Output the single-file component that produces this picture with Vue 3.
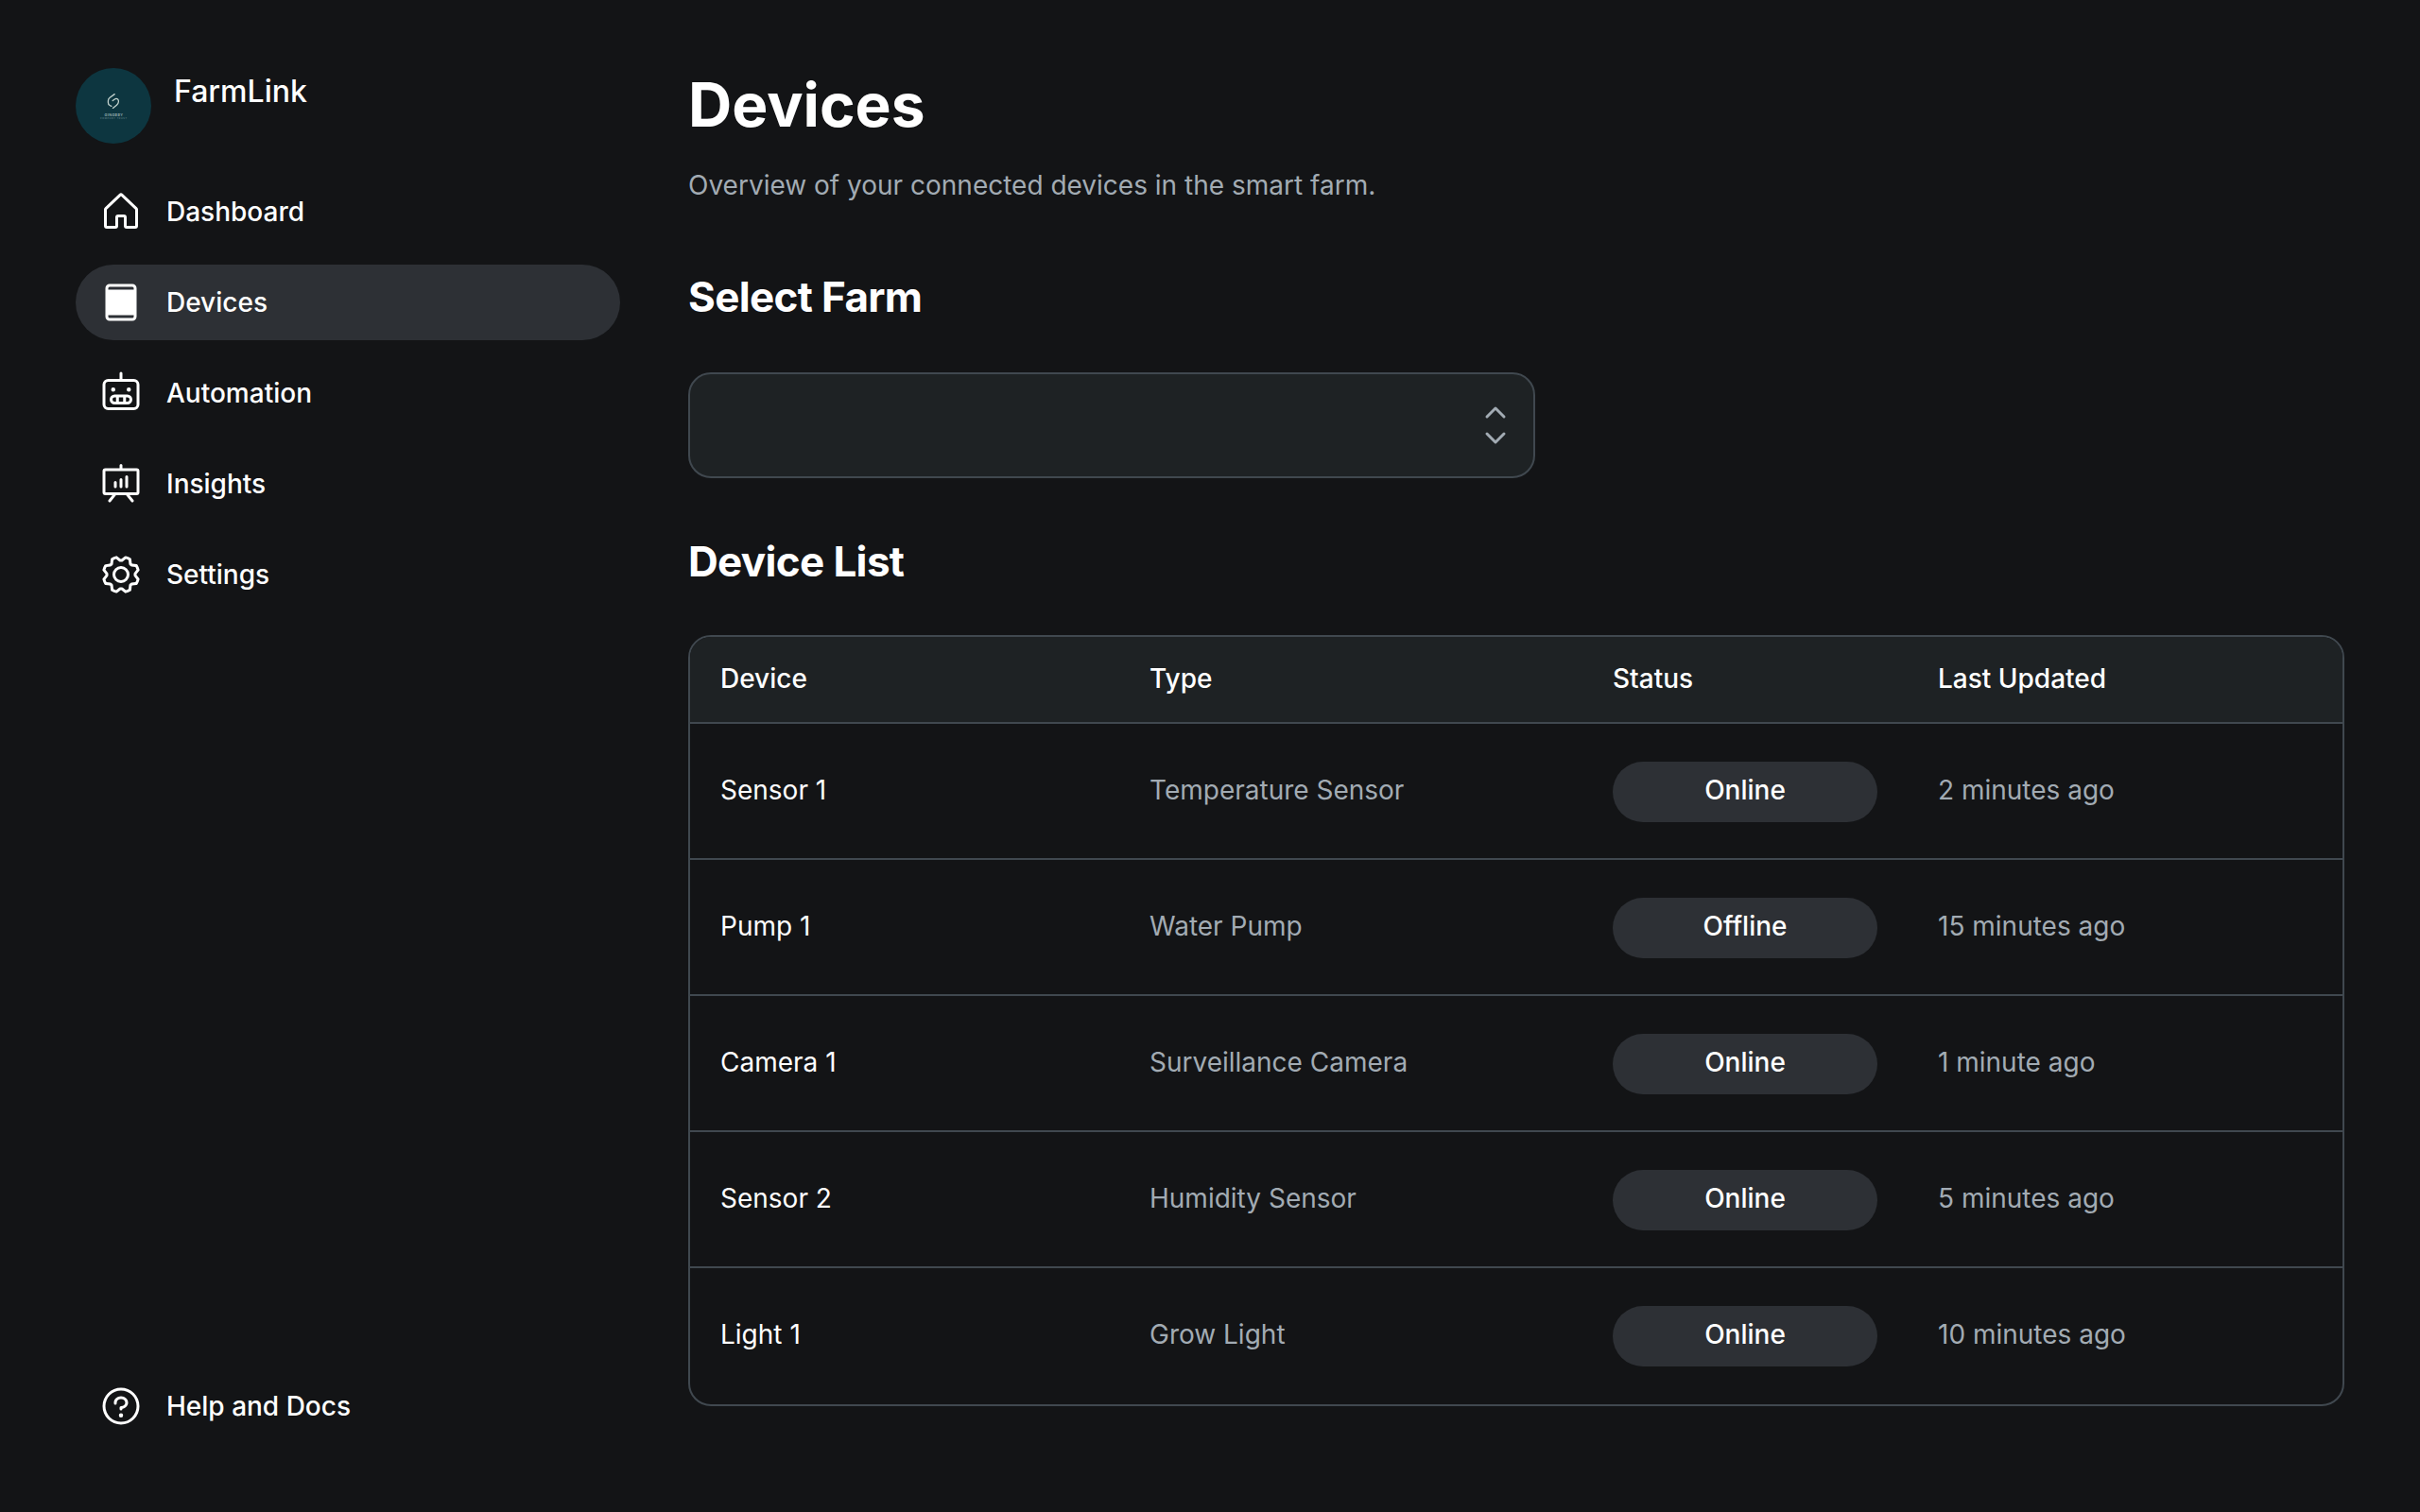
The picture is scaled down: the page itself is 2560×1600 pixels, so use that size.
<script setup>
const icons = {
  house: 'M218.83,103.77l-80-75.48a1.14,1.14,0,0,1-.11-.11,16,16,0,0,0-21.53,0l-.11.11L37.17,103.77A16,16,0,0,0,32,115.55V208a16,16,0,0,0,16,16H96a16,16,0,0,0,16-16V160h32v48a16,16,0,0,0,16,16h48a16,16,0,0,0,16-16V115.55A16,16,0,0,0,218.83,103.77ZM208,208H160V160a16,16,0,0,0-16-16H112a16,16,0,0,0-16,16v48H48V115.55l.11-.1L128,40l79.9,75.43.11.1Z',
  tablet: 'M192,24H64A24,24,0,0,0,40,48V208a24,24,0,0,0,24,24H192a24,24,0,0,0,24-24V48A24,24,0,0,0,192,24ZM64,40H192a8,8,0,0,1,8,8v8H56V48A8,8,0,0,1,64,40ZM192,216H64a8,8,0,0,1-8-8v-8H200v8A8,8,0,0,1,192,216Z',
  robot: 'M200,48H136V16a8,8,0,0,0-16,0V48H56A32,32,0,0,0,24,80V192a32,32,0,0,0,32,32H200a32,32,0,0,0,32-32V80A32,32,0,0,0,200,48Zm16,144a16,16,0,0,1-16,16H56a16,16,0,0,1-16-16V80A16,16,0,0,1,56,64H200a16,16,0,0,1,16,16Zm-52-56H92a28,28,0,0,0,0,56h72a28,28,0,0,0,0-56Zm-24,16v24H116V152ZM80,164a12,12,0,0,1,12-12h8v24H92A12,12,0,0,1,80,164Zm84,12h-8V152h8a12,12,0,0,1,0,24ZM72,108a12,12,0,1,1,12,12A12,12,0,0,1,72,108Zm88,0a12,12,0,1,1,12,12A12,12,0,0,1,160,108Z',
  chart: 'M216,40H136V24a8,8,0,0,0-16,0V40H40A16,16,0,0,0,24,56V176a16,16,0,0,0,16,16H79.36L57.75,219a8,8,0,0,0,12.5,10l29.59-37h56.32l29.59,37a8,8,0,1,0,12.5-10l-21.61-27H216a16,16,0,0,0,16-16V56A16,16,0,0,0,216,40Zm0,136H40V56H216V176ZM104,120v24a8,8,0,0,1-16,0V120a8,8,0,0,1,16,0Zm32-16v40a8,8,0,0,1-16,0V104a8,8,0,0,1,16,0Zm32-16v56a8,8,0,0,1-16,0V88a8,8,0,0,1,16,0Z',
  gear: 'M128,80a48,48,0,1,0,48,48A48.05,48.05,0,0,0,128,80Zm0,80a32,32,0,1,1,32-32A32,32,0,0,1,128,160Zm88-29.84q.06-2.16,0-4.32l14.92-18.64a8,8,0,0,0,1.48-7.06,107.21,107.21,0,0,0-10.88-26.25,8,8,0,0,0-6-3.93l-23.72-2.64q-1.48-1.56-3-3L186,40.54a8,8,0,0,0-3.94-6,107.71,107.71,0,0,0-26.25-10.87,8,8,0,0,0-7.06,1.49L130.16,40Q128,40,125.84,40L107.2,25.11a8,8,0,0,0-7.06-1.48A107.6,107.6,0,0,0,73.89,34.51a8,8,0,0,0-3.93,6L67.32,64.27q-1.56,1.49-3,3L40.54,70a8,8,0,0,0-6,3.94,107.71,107.71,0,0,0-10.87,26.25,8,8,0,0,0,1.49,7.06L40,125.84Q40,128,40,130.16L25.11,148.8a8,8,0,0,0-1.48,7.06,107.21,107.21,0,0,0,10.88,26.25,8,8,0,0,0,6,3.93l23.72,2.64q1.49,1.56,3,3L70,215.46a8,8,0,0,0,3.94,6,107.71,107.71,0,0,0,26.25,10.87,8,8,0,0,0,7.06-1.49L125.84,216q2.16.06,4.32,0l18.64,14.92a8,8,0,0,0,7.06,1.48,107.21,107.21,0,0,0,26.25-10.88,8,8,0,0,0,3.93-6l2.64-23.72q1.56-1.48,3-3L215.46,186a8,8,0,0,0,6-3.94,107.71,107.71,0,0,0,10.87-26.25,8,8,0,0,0-1.49-7.06Zm-16.1-6.5a73.93,73.93,0,0,1,0,8.68,8,8,0,0,0,1.74,5.48l14.19,17.73a91.57,91.57,0,0,1-6.23,15L187,173.11a8,8,0,0,0-5.1,2.64,74.11,74.11,0,0,1-6.14,6.14,8,8,0,0,0-2.64,5.1l-2.51,22.58a91.32,91.32,0,0,1-15,6.23l-17.74-14.19a8,8,0,0,0-5-1.75h-.48a73.93,73.93,0,0,1-8.68,0,8,8,0,0,0-5.48,1.74L100.45,215.8a91.57,91.57,0,0,1-15-6.23L82.89,187a8,8,0,0,0-2.64-5.1,74.11,74.11,0,0,1-6.14-6.14,8,8,0,0,0-5.1-2.64L46.43,170.6a91.32,91.32,0,0,1-6.23-15l14.19-17.74a8,8,0,0,0,1.74-5.48,73.93,73.93,0,0,1,0-8.68,8,8,0,0,0-1.74-5.48L40.2,100.45a91.57,91.57,0,0,1,6.23-15L69,82.89a8,8,0,0,0,5.1-2.64,74.11,74.11,0,0,1,6.14-6.14A8,8,0,0,0,82.89,69L85.4,46.43a91.32,91.32,0,0,1,15-6.23l17.74,14.19a8,8,0,0,0,5.48,1.74,73.93,73.93,0,0,1,8.68,0,8,8,0,0,0,5.48-1.74L155.55,40.2a91.57,91.57,0,0,1,15,6.23L173.11,69a8,8,0,0,0,2.64,5.1,74.11,74.11,0,0,1,6.14,6.14,8,8,0,0,0,5.1,2.64l22.58,2.51a91.32,91.32,0,0,1,6.23,15l-14.19,17.74A8,8,0,0,0,199.87,123.66Z',
  question: 'M140,180a12,12,0,1,1-12-12A12,12,0,0,1,140,180ZM128,72c-22.06,0-40,16.15-40,36v4a8,8,0,0,0,16,0v-4c0-11,10.77-20,24-20s24,9,24,20-10.77,20-24,20a8,8,0,0,0-8,8v8a8,8,0,0,0,16,0v-.72c18.24-3.35,32-17.9,32-35.28C168,88.15,150.06,72,128,72Zm104,56A104,104,0,1,1,128,24,104.11,104.11,0,0,1,232,128Zm-16,0a88,88,0,1,0-88,88A88.1,88.1,0,0,0,216,128Z',
  upDown: 'M181.66,170.34a8,8,0,0,1,0,11.32l-48,48a8,8,0,0,1-11.32,0l-48-48a8,8,0,0,1,11.32-11.32L128,212.69l42.34-42.35A8,8,0,0,1,181.66,170.34Zm-96-84.68L128,43.31l42.34,42.35a8,8,0,0,0,11.32-11.32l-48-48a8,8,0,0,0-11.32,0l-48,48A8,8,0,0,0,85.66,85.66Z'
}

const nav = [
  { label: 'Dashboard', icon: 'house' },
  { label: 'Devices', icon: 'tablet', active: true },
  { label: 'Automation', icon: 'robot' },
  { label: 'Insights', icon: 'chart' },
  { label: 'Settings', icon: 'gear' }
]

const devices = [
  { name: 'Sensor 1', type: 'Temperature Sensor', status: 'Online', updated: '2 minutes ago' },
  { name: 'Pump 1', type: 'Water Pump', status: 'Offline', updated: '15 minutes ago' },
  { name: 'Camera 1', type: 'Surveillance Camera', status: 'Online', updated: '1 minute ago' },
  { name: 'Sensor 2', type: 'Humidity Sensor', status: 'Online', updated: '5 minutes ago' },
  { name: 'Light 1', type: 'Grow Light', status: 'Online', updated: '10 minutes ago' }
]
</script>

<template>
  <div class="page">
    <aside class="sidebar">
      <div class="top">
        <div class="brand">
          <svg class="logo" viewBox="0 0 80 80">
            <circle cx="40" cy="40" r="40" fill="#0d3640" />
            <g fill="none" stroke="#c3d3ce" stroke-width="1.3" stroke-linecap="round" stroke-linejoin="round">
              <path d="M41.2 27.6 36.2 31.2Q34.4 32.6 34.4 34.8V36.4Q34.4 38.4 36.2 39.5L37.8 40.4" />
              <path d="M39.2 34.6 41 33.2Q43 31.8 44.6 33Q45.6 33.9 45.4 35.8Q45.2 37.8 43.4 39.2L39.4 42.4" />
            </g>
            <text x="40.3" y="51.3" text-anchor="middle" font-size="3.8" font-weight="600" fill="#9fb5b5" textLength="19.5">GINGBBY</text>
            <text x="40" y="54.3" text-anchor="middle" font-size="2.4" fill="#64858a" textLength="28">COMPANY TRUST</text>
          </svg>
          <h1>FarmLink</h1>
        </div>
        <nav class="menu">
          <a v-for="n in nav" :key="n.label" class="item" :class="{ active: n.active }">
            <svg class="icon" viewBox="0 0 256 256"><path :d="icons[n.icon]" fill-rule="evenodd" /></svg>
            <span>{{ n.label }}</span>
          </a>
        </nav>
      </div>
      <a class="item">
        <svg class="icon" viewBox="0 0 256 256"><path :d="icons.question" /></svg>
        <span>Help and Docs</span>
      </a>
    </aside>

    <main class="content">
      <header class="intro">
        <p class="title">Devices</p>
        <p class="subtitle">Overview of your connected devices in the smart farm.</p>
      </header>

      <h2>Select Farm</h2>
      <div class="select">
        <svg class="icon" viewBox="0 0 256 256"><path :d="icons.upDown" /></svg>
      </div>

      <h2>Device List</h2>
      <div class="table">
        <div class="row head">
          <span>Device</span><span>Type</span><span>Status</span><span>Last Updated</span>
        </div>
        <div v-for="d in devices" :key="d.name" class="row">
          <span class="name">{{ d.name }}</span>
          <span>{{ d.type }}</span>
          <span class="pill">{{ d.status }}</span>
          <span>{{ d.updated }}</span>
        </div>
      </div>
    </main>
  </div>
</template>

<style>
body {
  background: #131416;
}
</style>

<style scoped>
.page {
  box-sizing: border-box;
  height: 1600px;
  padding: 40px 48px;
  display: flex;
  gap: 8px;
  background: #131416;
  color: #fff;
  font-family: Inter, "Noto Sans", sans-serif;
  font-size: 28px;
  line-height: 42px;
}
h1, h2, p {
  margin: 0;
}
.sidebar {
  box-sizing: border-box;
  width: 640px;
  flex: none;
  padding: 32px;
  display: flex;
  flex-direction: column;
  justify-content: space-between;
  font-weight: 500;
}
.top {
  display: flex;
  flex-direction: column;
  gap: 32px;
}
.brand {
  display: flex;
  gap: 24px;
}
.logo {
  width: 80px;
  height: 80px;
}
h1 {
  font-size: 32px;
  line-height: 50px;
  font-weight: 500;
}
.menu {
  display: flex;
  flex-direction: column;
  gap: 16px;
}
.item {
  display: flex;
  align-items: center;
  gap: 24px;
  height: 80px;
  padding: 0 24px;
  border-radius: 40px;
}
.item.active {
  background: #2d3035;
}
.icon {
  width: 48px;
  height: 48px;
  flex: none;
  fill: currentColor;
}
.content {
  flex: 1;
  padding: 32px;
}
.intro {
  display: flex;
  flex-direction: column;
  gap: 26px;
  padding-bottom: 34px;
}
.title {
  font-size: 64px;
  line-height: 78px;
  font-weight: 700;
}
.subtitle {
  line-height: 40px;
  color: #a2abb3;
}
h2 {
  font-size: 44px;
  line-height: 55px;
  font-weight: 700;
  letter-spacing: -0.015em;
  padding: 37px 0 26px;
}
.select {
  box-sizing: border-box;
  width: 896px;
  height: 112px;
  margin: 26px 0 24px;
  padding-right: 16px;
  border: 2px solid #40484f;
  border-radius: 24px;
  background: #1e2224;
  color: #a2abb3;
  display: flex;
  align-items: center;
  justify-content: flex-end;
}
.table {
  margin-top: 24px;
  border: 2px solid #40484f;
  border-radius: 24px;
  overflow: hidden;
}
.row {
  display: grid;
  grid-template-columns: 454px 490px 344px 1fr;
  align-items: center;
  padding-left: 32px;
  height: 144px;
  color: #a2abb3;
}
.row:not(:last-child) {
  box-shadow: inset 0 -2px #40484f;
}
.row span:not(.pill) {
  padding-bottom: 4px;
}
.row.head {
  height: 92px;
  background: #1e2224;
  color: #fff;
  font-weight: 500;
}
.row .name {
  color: #fff;
}
.pill {
  width: 280px;
  height: 64px;
  line-height: 60px;
  border-radius: 32px;
  background: #2d3035;
  color: #fff;
  font-weight: 500;
  text-align: center;
}
</style>
